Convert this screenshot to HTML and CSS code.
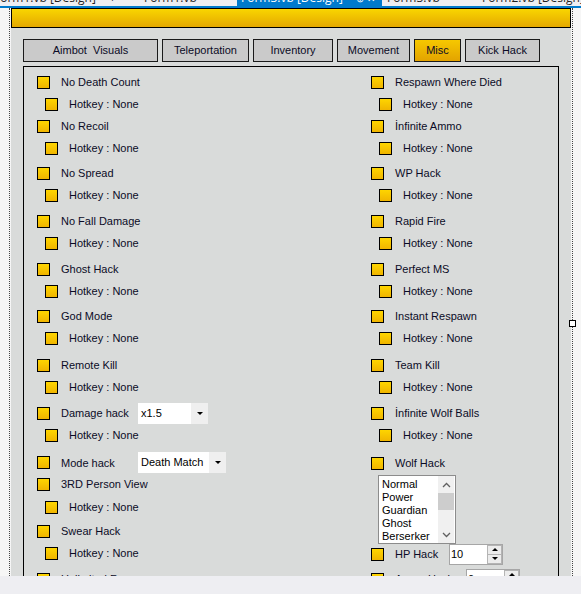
FILE: index.html
```html
<!DOCTYPE html>
<html lang="en">
<head>
  <meta charset="UTF-8">
  <title>Form3.vb [Design]</title>
  <link rel="stylesheet" href="styles.css">
</head>
<body>

  <div class="doc-tabs">
    <span class="doc-tab first">Form1.vb [Design]</span>
    <span class="doc-tab pin">+</span>
    <span class="doc-tab code1">Form1.vb</span>
    <span class="doc-tab active">Form3.vb [Design] <span class="tab-icons">&#8853; &#10005;</span></span>
    <span class="doc-tab code3">Form3.vb</span>
    <span class="doc-tab last">Form2.vb [Design]</span>
  </div>
  <div class="doc-line"></div>

  <div class="designer">
    <div class="selection">
      <div class="form">
        <div class="form-title"></div>
        <div class="form-body">

          <div class="tabs">
            <div class="tab w-aimbot">Aimbot  Visuals</div>
            <div class="tab w-tele">Teleportation</div>
            <div class="tab w-inv">Inventory</div>
            <div class="tab w-move">Movement</div>
            <div class="tab w-misc active">Misc</div>
            <div class="tab w-kick">Kick Hack</div>
          </div>

          <div class="panel">
            <!-- left column -->
            <div class="col col-left">
              <div class="row"><span class="cb"></span><span class="lbl">No Death Count</span></div>
              <div class="row sub"><span class="cb"></span><span class="lbl">Hotkey : None</span></div>
              <div class="row"><span class="cb"></span><span class="lbl">No Recoil</span></div>
              <div class="row sub"><span class="cb"></span><span class="lbl">Hotkey : None</span></div>
              <div class="row m3"><span class="cb"></span><span class="lbl">No Spread</span></div>
              <div class="row sub"><span class="cb"></span><span class="lbl">Hotkey : None</span></div>
              <div class="row m4"><span class="cb"></span><span class="lbl">No Fall Damage</span></div>
              <div class="row sub"><span class="cb"></span><span class="lbl">Hotkey : None</span></div>
              <div class="row m4"><span class="cb"></span><span class="lbl">Ghost Hack</span></div>
              <div class="row sub"><span class="cb"></span><span class="lbl">Hotkey : None</span></div>
              <div class="row m3"><span class="cb"></span><span class="lbl">God Mode</span></div>
              <div class="row sub"><span class="cb"></span><span class="lbl">Hotkey : None</span></div>
              <div class="row m5"><span class="cb"></span><span class="lbl">Remote Kill</span></div>
              <div class="row sub"><span class="cb"></span><span class="lbl">Hotkey : None</span></div>
              <div class="row m4">
                <span class="cb"></span><span class="lbl combo-lbl">Damage hack</span>
                <div class="combo w-dmg"><span class="combo-text">x1.5</span><span class="combo-btn"><i class="arrow"></i></span></div>
              </div>
              <div class="row sub"><span class="cb"></span><span class="lbl">Hotkey : None</span></div>
              <div class="row m6 short">
                <span class="cb"></span><span class="lbl combo-lbl">Mode hack</span>
                <div class="combo w-mode"><span class="combo-text">Death Match</span><span class="combo-btn"><i class="arrow"></i></span></div>
              </div>
              <div class="row"><span class="cb"></span><span class="lbl">3RD Person View</span></div>
              <div class="row sub m1"><span class="cb"></span><span class="lbl">Hotkey : None</span></div>
              <div class="row m2"><span class="cb"></span><span class="lbl">Swear Hack</span></div>
              <div class="row sub"><span class="cb"></span><span class="lbl">Hotkey : None</span></div>
              <div class="row m4"><span class="cb"></span><span class="lbl">Unlimited Fp</span></div>
            </div>

            <!-- right column -->
            <div class="col col-right">
              <div class="row"><span class="cb"></span><span class="lbl">Respawn Where Died</span></div>
              <div class="row sub"><span class="cb"></span><span class="lbl">Hotkey : None</span></div>
              <div class="row"><span class="cb"></span><span class="lbl">İnfinite Ammo</span></div>
              <div class="row sub"><span class="cb"></span><span class="lbl">Hotkey : None</span></div>
              <div class="row m3"><span class="cb"></span><span class="lbl">WP Hack</span></div>
              <div class="row sub"><span class="cb"></span><span class="lbl">Hotkey : None</span></div>
              <div class="row m4"><span class="cb"></span><span class="lbl">Rapid Fire</span></div>
              <div class="row sub"><span class="cb"></span><span class="lbl">Hotkey : None</span></div>
              <div class="row m4"><span class="cb"></span><span class="lbl">Perfect MS</span></div>
              <div class="row sub"><span class="cb"></span><span class="lbl">Hotkey : None</span></div>
              <div class="row m3"><span class="cb"></span><span class="lbl">Instant Respawn</span></div>
              <div class="row sub"><span class="cb"></span><span class="lbl">Hotkey : None</span></div>
              <div class="row m5"><span class="cb"></span><span class="lbl">Team Kill</span></div>
              <div class="row sub"><span class="cb"></span><span class="lbl">Hotkey : None</span></div>
              <div class="row m4"><span class="cb"></span><span class="lbl">İnfinite Wolf Balls</span></div>
              <div class="row sub"><span class="cb"></span><span class="lbl">Hotkey : None</span></div>
              <div class="row m6"><span class="cb"></span><span class="lbl">Wolf Hack</span></div>

              <div class="listbox">
                <div class="list-items">
                  <div>Normal</div>
                  <div>Power</div>
                  <div>Guardian</div>
                  <div>Ghost</div>
                  <div>Berserker</div>
                </div>
                <div class="vscroll">
                  <span class="sb-btn"><svg width="9" height="6" viewBox="0 0 9 6"><polyline points="1,5 4.5,1.5 8,5" fill="none" stroke="#606060" stroke-width="1.3"/></svg></span>
                  <span class="sb-thumb"></span>
                  <span class="sb-track"></span>
                  <span class="sb-btn"><svg width="9" height="6" viewBox="0 0 9 6"><polyline points="1,1 4.5,4.5 8,1" fill="none" stroke="#606060" stroke-width="1.3"/></svg></span>
                </div>
              </div>

              <div class="row hp">
                <span class="cb"></span><span class="lbl num-lbl">HP Hack</span>
                <div class="numeric">
                  <span class="num-text">10</span>
                  <span class="spin"><span class="spin-up"><i class="tri-up"></i></span><span class="spin-down"><i class="tri-down"></i></span></span>
                </div>
              </div>
              <div class="row m3">
                <span class="cb"></span><span class="lbl num-lbl wide">Armor Hack</span>
                <div class="numeric">
                  <span class="num-text">0</span>
                  <span class="spin"><span class="spin-up"><i class="tri-up"></i></span><span class="spin-down"><i class="tri-down"></i></span></span>
                </div>
              </div>
            </div>
          </div>

        </div>
      </div>
      <span class="handle"></span>
    </div>
  </div>

  <div class="status"></div>

</body>
</html>
```

FILE: styles.css
```css
body {
  margin: 0;
  background: #eeeef2;
  font-family: "Liberation Sans", Arial, sans-serif;
  font-size: 11px;
  color: #0b0b26;
  overflow: hidden;
}

/* visual studio document tabs, mostly scrolled off */
.doc-tabs {
  display: flex;
  height: 6px;
  overflow: hidden;
  background: #eeeef2;
  font-family: "Open Sans", sans-serif;
  font-size: 12px;
  color: #1e1e1e;
  white-space: nowrap;
}
.doc-tab {
  flex: none;
  height: 16px;
  line-height: 16px;
  margin-top: -10px;
}
.doc-tab.first { width: 105px; margin-left: -6px; }
.doc-tab.pin { width: 35px; padding-left: 10px; }
.doc-tab.code1 { width: 93px; }
.doc-tab.active {
  width: 141px;
  padding-left: 4px;
  background: #007acc;
  color: #fff;
}
.tab-icons { margin-left: 10px; font-size: 10px; }
.doc-tab.code3 { width: 92px; padding-left: 5px; }
.doc-tab.last { padding-left: 3px; }
.doc-line {
  height: 2px;
  background: #007acc;
}

.designer {
  height: 568px;
  overflow: hidden;
  background: #f6f6f6;
  padding-left: 9px;
}
.selection {
  position: relative;
  box-sizing: border-box;
  width: 564px;
  height: 100%;
  padding: 0 1px;
  border-left: 1px dotted #444;
  border-right: 1px dotted #444;
}
.handle {
  position: absolute;
  left: 559px;
  top: 312px;
  width: 5px;
  height: 5px;
  background: #fff;
  border: 1px solid #000;
}

.form {
  height: 100%;
  display: flex;
  flex-direction: column;
}
.form-title {
  flex: none;
  height: 18px;
  border: 1px solid #000;
  background: linear-gradient(#f9d500, #e4a800);
}
.form-body {
  flex: 1;
  background: #d9dbda;
  padding: 11px 0 0 12px;
}

.tabs {
  display: flex;
  gap: 4px;
}
.tab {
  box-sizing: border-box;
  height: 23px;
  line-height: 21px;
  border: 1px solid #1a1a1a;
  background: #cacaca;
  text-align: center;
  white-space: pre;
}
.tab.active { background: linear-gradient(#f6c800, #e3a300); }
.w-aimbot { width: 135px; }
.w-tele { width: 87px; }
.w-inv { width: 80px; }
.w-move { width: 73px; }
.w-misc { width: 47px; }
.w-kick { width: 75px; }

.panel {
  box-sizing: border-box;
  width: 536px;
  height: 620px;
  margin-top: 4px;
  border: 1px solid #000;
  padding: 4px 0 0 13px;
  display: flex;
}
.col {
  display: flex;
  flex-direction: column;
}
.col-left { width: 334px; }
.col-right { flex: 1; }

.row {
  display: flex;
  align-items: center;
  height: 22px;
  flex: none;
}
.row.sub { padding-left: 8px; }
.row.short { height: 21px; }
.row.hp { margin-top: -1px; }
.m1 { margin-top: 1px; }
.m2 { margin-top: 2px; }
.m3 { margin-top: 3px; }
.m4 { margin-top: 4px; }
.m5 { margin-top: 5px; }
.m6 { margin-top: 6px; }

.cb {
  flex: none;
  box-sizing: border-box;
  width: 13px;
  height: 13px;
  border: 1px solid #000;
  background: linear-gradient(#fed500, #f0b500);
}
.lbl {
  margin-left: 11px;
  white-space: nowrap;
}
.combo-lbl { width: 77px; }
.num-lbl { width: 54px; }
.num-lbl.wide { width: 71px; }

.combo {
  display: flex;
  height: 21px;
  background: #fff;
  color: #000;
}
.w-dmg { width: 70px; }
.w-mode { width: 88px; }
.combo-text {
  flex: 1;
  padding-left: 3px;
  line-height: 21px;
}
.combo-btn {
  width: 17px;
  background: #efefef;
  display: flex;
  align-items: center;
  justify-content: center;
}
.arrow {
  width: 0;
  height: 0;
  border-left: 3px solid transparent;
  border-right: 3px solid transparent;
  border-top: 3px solid #000;
}

.listbox {
  box-sizing: border-box;
  display: flex;
  width: 78px;
  height: 69px;
  margin: 1px 0 0 7px;
  border: 1px solid #8c8c8c;
  background: #fff;
  color: #000;
}
.list-items {
  flex: 1;
  padding: 2px 0 0 3px;
  line-height: 13px;
  overflow: hidden;
}
.vscroll {
  width: 16px;
  margin-right: 1px;
  background: #f0f0f0;
  display: flex;
  flex-direction: column;
}
.sb-btn {
  height: 17px;
  display: flex;
  align-items: center;
  justify-content: center;
}
.sb-thumb {
  height: 17px;
  background: #cdcdcd;
}
.sb-track { flex: 1; }

.numeric {
  box-sizing: border-box;
  display: flex;
  width: 54px;
  height: 21px;
  border: 1px solid #a6a6a6;
  background: #fff;
  color: #000;
}
.num-text {
  flex: 1;
  padding-left: 1px;
  line-height: 19px;
}
.spin {
  width: 15px;
  display: flex;
  flex-direction: column;
}
.spin-up, .spin-down {
  flex: 1;
  box-sizing: border-box;
  border: 1px solid #b4b4b4;
  background: #ececec;
  display: flex;
  align-items: center;
  justify-content: center;
}
.spin-down { border-top: none; }
.tri-up, .tri-down {
  width: 0;
  height: 0;
  border-left: 3px solid transparent;
  border-right: 3px solid transparent;
}
.tri-up { border-bottom: 3px solid #000; }
.tri-down { border-top: 3px solid #000; }

.status {
  height: 18px;
  background: #eeeef2;
}
```
